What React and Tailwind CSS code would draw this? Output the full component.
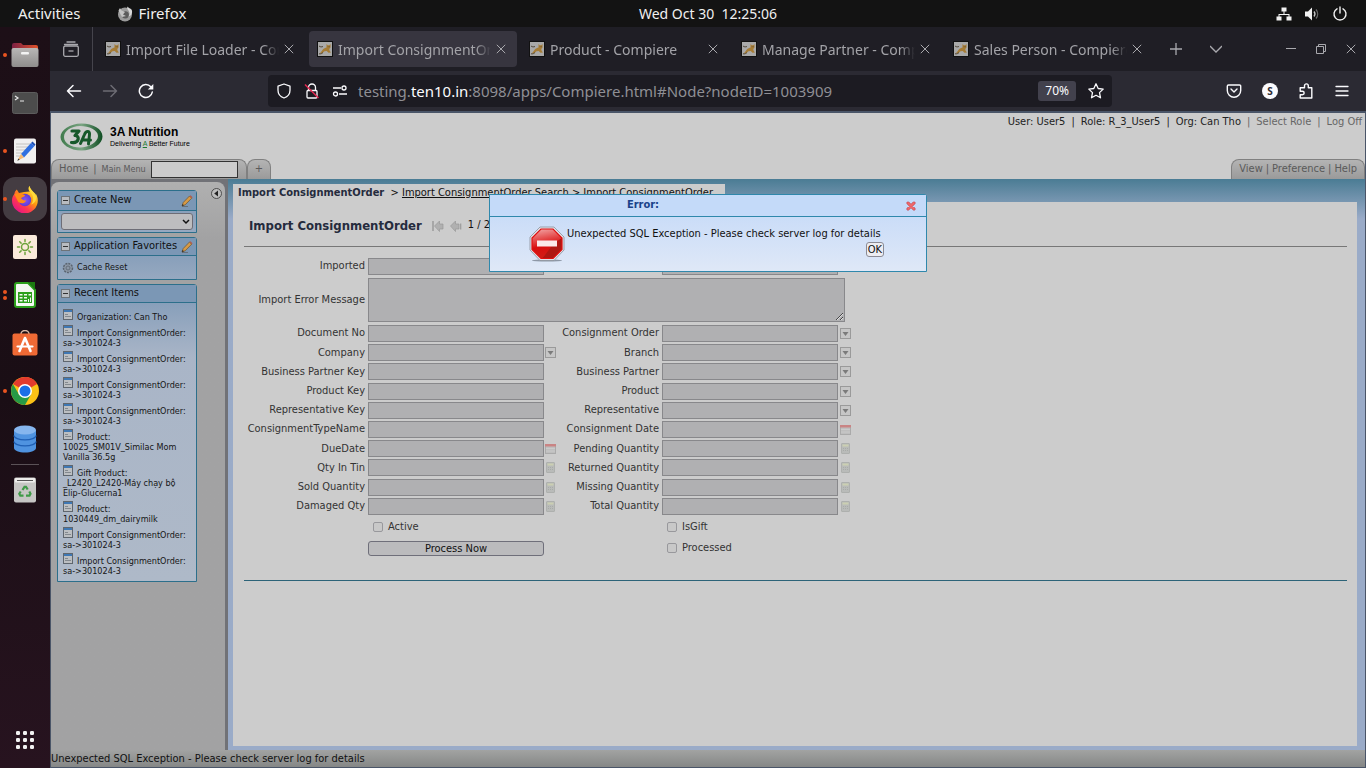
import React from "react";

/* ---------- dock icons ---------- */

function FilesIcon() {
  return (
    <svg viewBox="0 0 28 28" className="size-7">
      <defs>
        <linearGradient id="fTop" x1="0" x2="1"><stop offset="0" stopColor="#7d2144" /><stop offset="1" stopColor="#e0522a" /></linearGradient>
        <linearGradient id="fBody" x1="0" x2="0" y1="0" y2="1"><stop offset="0" stopColor="#b9b7b6" /><stop offset="1" stopColor="#8f8d8c" /></linearGradient>
      </defs>
      <path d="M1 4a2 2 0 0 1 2-2h7l2 2h13a2 2 0 0 1 2 2v8H1z" fill="url(#fTop)" />
      <rect x="0.500" y="7" width="27" height="19" rx="2" fill="url(#fBody)" />
      <rect x="10" y="11" width="8" height="2.500" rx="1" fill="#f3f3f3" />
    </svg>
  );
}

function TerminalIcon() {
  return (
    <svg viewBox="0 0 26 22" className="h-[22px] w-[26px]">
      <rect x="0.500" y="0.500" width="25" height="21" rx="2" fill="#4c4c4c" stroke="#5d5d5d" />
      <path d="M3 4l3 2-3 2M8 9h4" fill="none" stroke="#e8e8e8" strokeWidth="1.200" />
    </svg>
  );
}

function EditorIcon() {
  return (
    <svg viewBox="0 0 24 26" className="h-[26px] w-6">
      <rect x="1" y="0.500" width="22" height="25" rx="2" fill="#f1f0ef" />
      <path d="M3 6h14M3 9h12M3 12h12M3 15h8M3 18h5" stroke="#c4c2c0" strokeWidth="1" />
      <path d="M8 16L18 5l3.500 3L11 19.500z" fill="#2f6fe0" />
      <path d="M18 5l3.500 3 1-1.500-3-3z" fill="#1c4fb5" />
      <path d="M8 16l3 3.500-6.500 3z" fill="#f5b870" />
      <path d="M5.500 20.500l1.200 1.300-2.400 1z" fill="#333" />
    </svg>
  );
}

function FirefoxIcon() {
  return (
    <svg viewBox="0 0 28 28" className="size-7">
      <defs>
        <linearGradient id="ffx" x1="0.900" y1="0.100" x2="0.200" y2="0.950">
          <stop offset="0" stopColor="#fff44f" /><stop offset="0.400" stopColor="#ff980e" /><stop offset="0.700" stopColor="#ff3750" /><stop offset="1" stopColor="#e31587" />
        </linearGradient>
        <radialGradient id="ffp"><stop offset="0" stopColor="#8a55f2" /><stop offset="1" stopColor="#5b3bd6" /></radialGradient>
      </defs>
      <path d="M18.500 1c-1.500 2-1.300 4 .3 5.500L13 7 8 8 5.800 4.500C4 6 3.500 7.500 3.400 9 1.700 11 1 13 1 15.500a12.700 12.700 0 0 0 25.800 0c0-3-1-5.500-2.300-7l.2 2C23.500 7 19.500 5.500 18.500 1z" fill="url(#ffx)" />
      <circle cx="14" cy="15" r="6.200" fill="url(#ffp)" />
      <path d="M3.400 9c2-1.300 4-1 5.800 0 2 0 5 .5 4.800 1.800 0 1-3.300 1-3.800 3 1.600.5 2 2.400 5 1.600-1.500 3.400-6.200 3.800-8.200 1.200" fill="#ff8a16" />
      <path d="M18.500 1c-1.500 3 .5 5.500 2.300 8 2 3 2 8-1 10.500 5-1 6.300-6 4.700-10C23.500 7 19.500 5.500 18.500 1z" fill="#ffd93a" />
    </svg>
  );
}

function SunIcon() {
  return (
    <svg viewBox="0 0 24 24" className="size-6">
      <rect width="24" height="24" rx="2" fill="#fbeadb" />
      <circle cx="12" cy="12" r="3.500" fill="none" stroke="#6ea33c" strokeWidth="1.500" />
      <path d="M12 4.500v2M12 17.500v2M4.500 12h2M17.500 12h2M6.700 6.700l1.400 1.400M15.900 15.900l1.400 1.400M6.700 17.300l1.400-1.400M15.900 8.100l1.400-1.400" stroke="#6ea33c" strokeWidth="1.500" strokeLinecap="round" />
    </svg>
  );
}

function CalcIcon() {
  return (
    <svg viewBox="0 0 24 26" className="h-[26px] w-6">
      <path d="M2 3a2 2 0 0 1 2-2h11l7 7v15a2 2 0 0 1-2 2H4a2 2 0 0 1-2-2z" fill="#f4f8f2" stroke="#2ca01c" strokeWidth="2" />
      <path d="M15 0h7v8z" fill="#1c7a10" />
      <rect x="5" y="10" width="14" height="11" fill="#2ca01c" />
      <path d="M6.500 12h3v1.500h-3zM11 12h3v1.500h-3zM15.500 12h2.500v1.500h-2.500zM6.500 15h3v1.500h-3zM11 15h3v1.500h-3zM6.500 18h3v1.500h-3zM11 18h3v1.500h-3zM15 20v-3h1v3zM17 20v-4.500h1V20z" fill="#f4f8f2" />
    </svg>
  );
}

function SoftwareIcon() {
  return (
    <svg viewBox="0 0 26 26" className="size-[26px]">
      <path d="M9 4a4 3.500 0 0 1 8 0" fill="none" stroke="#d8b9a6" strokeWidth="1.500" />
      <rect x="0.500" y="3.500" width="25" height="22" rx="2" fill="#ef6a35" />
      <path d="M13 8L7.500 21M13 8l5.500 13" stroke="#fff" strokeWidth="2.600" strokeLinecap="round" />
      <path d="M5.500 16.500h15" stroke="#fff" strokeWidth="2.200" strokeLinecap="round" />
    </svg>
  );
}

function ChromeIcon() {
  return (
    <svg viewBox="0 0 28 28" className="size-7">
      <circle cx="14" cy="14" r="14" fill="#fbc116" />
      <path d="M14 14L1.900 7A14 14 0 0 1 26.100 7z" fill="#e33b2e" />
      <path d="M14 0a14 14 0 0 1 12.100 7H14z" fill="#e33b2e" />
      <path d="M1.900 7A14 14 0 0 0 14 28l6-10.500L14 14l-6 3.500z" fill="#269a46" />
      <circle cx="14" cy="14" r="7" fill="#fff" />
      <circle cx="14" cy="14" r="5.500" fill="#1a6fe8" />
    </svg>
  );
}

function DatabaseIcon() {
  return (
    <svg viewBox="0 0 24 28" className="h-7 w-6">
      <path d="M1 5v18c0 2.500 5 4.500 11 4.500s11-2 11-4.500V5z" fill="#4f93e0" />
      <ellipse cx="12" cy="5" rx="11" ry="4.500" fill="#86b6ee" />
      <path d="M1 10.500c0 2.500 5 4.300 11 4.300s11-1.800 11-4.300M1 16.500c0 2.500 5 4.300 11 4.300s11-1.800 11-4.300" fill="none" stroke="#1f5fb4" strokeWidth="1.300" />
    </svg>
  );
}

function TrashIcon() {
  return (
    <svg viewBox="0 0 24 26" className="h-[26px] w-6">
      <rect x="1" y="0.500" width="22" height="25" rx="2" fill="#c6c6c4" />
      <rect x="2" y="1" width="20" height="4.500" rx="1" fill="#ededeb" />
      <path d="M4 3.500h16" stroke="#555" strokeWidth="1" />
      <g fill="none" stroke="#3f9a47" strokeWidth="2.200">
        <path d="M9.500 13l2-3.200h1.500l1.700 2.700" />
        <path d="M16.300 14.500l1.200 2.300-1 1.900h-3.500" />
        <path d="M10.500 18.700H7.300l-1-1.900 1.400-2.300" />
      </g>
    </svg>
  );
}

const DOCK = [
  { name: "Files", Icon: FilesIcon, dots: 1 },
  { name: "Terminal", Icon: TerminalIcon, dots: 0 },
  { name: "Text Editor", Icon: EditorIcon, dots: 1 },
  { name: "Firefox", Icon: FirefoxIcon, dots: 1, active: true },
  { name: "Weather", Icon: SunIcon, dots: 0 },
  { name: "Calc", Icon: CalcIcon, dots: 2 },
  { name: "Software", Icon: SoftwareIcon, dots: 0 },
  { name: "Chrome", Icon: ChromeIcon, dots: 1 },
  { name: "Database", Icon: DatabaseIcon, dots: 0 },
];

function DockButton({ name, Icon, dots, active }) {
  return (
    <button aria-label={name} className="relative flex h-12 w-full items-center justify-center">
      <span className="absolute left-[3px] flex flex-col gap-[2px]">
        {dots > 0 && <span className="size-1 rounded-full bg-[#e95420]" />}
        {dots > 1 && <span className="size-1 rounded-full bg-[#e95420]" />}
      </span>
      <span className={active ? "flex size-11 items-center justify-center rounded-xl bg-[#443c42]" : "flex size-11 items-center justify-center"}>
        <Icon />
      </span>
    </button>
  );
}

function Dock() {
  return (
    <nav aria-label="Dock" className="flex w-[50px] shrink-0 flex-col bg-linear-to-b from-[#1d0f17] via-[#1a0e15] to-[#27131f] pt-1">
      {DOCK.map((d) => <DockButton key={d.name} {...d} />)}
      <hr className="mx-[11px] my-px border-[#5b5257]" />
      <DockButton name="Trash" Icon={TrashIcon} dots={0} />
      <button aria-label="Show Applications" className="mt-auto flex justify-center pb-[18px]">
        <svg viewBox="0 0 20 20" className="size-5" fill="#f2f2f2">
          {[3, 10, 17].map((y) => [3, 10, 17].map((x) => <rect key={x + "-" + y} x={x - 2} y={y - 2} width="4" height="4" rx="1.300" />))}
        </svg>
      </button>
    </nav>
  );
}

/* ---------- desktop top bar ---------- */

function TopBar() {
  return (
    <header className="grid h-[27px] shrink-0 grid-cols-3 items-center bg-[#131313] text-[14px] text-[#f0f0f0]">
      <div className="flex items-center text-[15px]">
        <button className="pl-[18px]">Activities</button>
        <button className="ml-9 flex items-center gap-[6px]">
          <svg viewBox="0 0 16 16" className="size-4">
            <circle cx="8" cy="8.500" r="7" fill="#9b9b9b" />
            <circle cx="8.300" cy="8.800" r="3.600" fill="#5c5c5c" />
            <path d="M10.500.5c-1 2 .5 3 1.300 4.500 1.200 2 .8 4-.3 5.500 3-1 4.500-4 3-7C13.500 2.500 11.500 2 10.500.5z" fill="#d9d9d9" />
            <path d="M1.500 4.500L3 2l1.500 2.500L8 6 6 8.500l3 1.500-4 1z" fill="#c4c4c4" />
          </svg>
          Firefox
        </button>
      </div>
      <button className="justify-self-center pl-[50px] whitespace-pre">Wed Oct 30  12:25:06</button>
      <div className="flex items-center justify-end gap-3 pr-[18px]">
        <svg viewBox="0 0 16 16" className="size-4" fill="#f2f2f2">
          <path d="M5.500 1.500h5v4h-5zM0.500 10.500h5v4h-5zM10.500 10.500h5v4h-5zM7.500 5.500h1v2.500H13.500v2.500h-1V9h-9v1.500h-1V8h5z" />
        </svg>
        <svg viewBox="0 0 16 16" className="size-4">
          <path d="M1 5.500h3L8 1.500v13L4 10.500H1z" fill="#f2f2f2" />
          <path d="M10 5.500a4 4 0 0 1 0 5" fill="none" stroke="#c9c9c9" strokeWidth="1.300" />
          <path d="M12 3.500a7 7 0 0 1 0 9" fill="none" stroke="#6a6a6a" strokeWidth="1.300" />
        </svg>
        <svg viewBox="0 0 16 16" className="size-4" fill="none" stroke="#f2f2f2" strokeWidth="1.400" strokeLinecap="round">
          <path d="M5 2.800a6 6 0 1 0 6 0M8 1v6" />
        </svg>
      </div>
    </header>
  );
}

/* ---------- browser chrome ---------- */

const TABS = ["Import File Loader - Compiere", "Import ConsignmentOrder", "Product - Compiere", "Manage Partner - Compiere", "Sales Person - Compiere"];

function CatIcon() {
  return (
    <svg viewBox="0 0 16 16" className="size-4 shrink-0">
      <rect x="0.500" y="0.500" width="15" height="15" fill="#a9a9a9" stroke="#111" />
      <path d="M9.500 3l1.200 1.200h1.600L13.500 3v3.500l-1.200 1.500c.2 1.500.3 2 1.700 3.500l-2.500.2-1.800-1.700-2.200.2-2 1.800-3 .8 1.700-2 1.600-2.300c1-1.200 2.700-1.500 3.700-2z" fill="#a67c35" />
      <path d="M2 5c1.500 1.200 2.500 1 4 .5M2 12.800c2 .3 3-.3 4-1.300M10.800 5.700h.6M12.300 5.700h.5" fill="none" stroke="#4a4030" strokeWidth="0.900" />
    </svg>
  );
}

function CrossIcon() {
  return (
    <svg viewBox="0 0 10 10" className="size-[10px]" fill="none" stroke="#a9a9ae" strokeWidth="1">
      <path d="M0.800 0.800l8.400 8.400M9.200 0.800l-8.400 8.400" />
    </svg>
  );
}

function TabStrip() {
  return (
    <div className="flex h-11 items-center bg-[#1f1e25] text-[14px] text-[#a3a3a8]">
      <button aria-label="Recent browsing" className="flex h-full w-[43px] items-center justify-center border-r border-[#45444c]">
        <svg viewBox="0 0 16 16" className="size-4" fill="none" stroke="#a9a9ae" strokeWidth="1.300">
          <path d="M4 1h8M1.500 3.500h13" strokeLinecap="round" />
          <rect x="0.700" y="5" width="14.600" height="10.300" rx="1.500" />
          <path d="M5.500 10h5" />
        </svg>
      </button>
      <div role="tablist" className="flex gap-[4px] pl-1">
        {TABS.map((t, i) => (
          <div key={t} className={i === 1 ? "flex h-9 w-52 items-center gap-[5px] rounded bg-[#37353f] pr-[11px] pl-2" : "flex h-9 w-52 items-center gap-[5px] rounded pr-[11px] pl-2"}>
            <CatIcon />
            <button role="tab" aria-selected={i === 1} className="min-w-0 flex-1 overflow-hidden mask-r-from-90% text-left whitespace-nowrap">{t}</button>
            <button aria-label={"Close " + t}><CrossIcon /></button>
          </div>
        ))}
      </div>
      <div className="ml-[17px] flex items-center gap-7">
        <button aria-label="New tab">
          <svg viewBox="0 0 12 12" className="size-3" stroke="#a9a9ae" strokeWidth="1.300"><path d="M0 6h12M6 0v12" /></svg>
        </button>
        <button aria-label="List tabs">
          <svg viewBox="0 0 12 12" className="size-3" fill="none" stroke="#a9a9ae" strokeWidth="1.300"><path d="M0 3l6 6 6-6" /></svg>
        </button>
      </div>
      <div className="ml-auto flex items-center gap-5 pr-[10px]">
        <button aria-label="Minimize">
          <svg viewBox="0 0 10 10" className="size-[10px]" stroke="#a9a9ae"><path d="M0 4.500h10" /></svg>
        </button>
        <button aria-label="Restore">
          <svg viewBox="0 0 10 10" className="size-[10px]" fill="none" stroke="#a9a9ae"><path d="M0.500 2.500h7v7h-7zM2.500 2.500v-2h7v7h-2" /></svg>
        </button>
        <button aria-label="Close window"><CrossIcon /></button>
      </div>
    </div>
  );
}

function NavBar() {
  return (
    <div className="flex h-10 items-center bg-[#2b2a33]">
      <div className="flex items-center gap-5 pl-4">
        <button aria-label="Back">
          <svg viewBox="0 0 16 16" className="size-4" fill="none" stroke="#fbfbfe" strokeWidth="1.500" strokeLinecap="round" strokeLinejoin="round"><path d="M14.500 8h-13M7 2.500L1.500 8 7 13.500" /></svg>
        </button>
        <button aria-label="Forward">
          <svg viewBox="0 0 16 16" className="size-4" fill="none" stroke="#6d6c74" strokeWidth="1.500" strokeLinecap="round" strokeLinejoin="round"><path d="M1.500 8h13M9 2.500L14.500 8 9 13.500" /></svg>
        </button>
        <button aria-label="Reload">
          <svg viewBox="0 0 16 16" className="size-4" fill="none" stroke="#fbfbfe" strokeWidth="1.500" strokeLinecap="round"><path d="M14.300 9a6.500 6.500 0 1 1-1.500-5.200" /><path d="M15.300 1v5.500H9.800z" fill="#fbfbfe" stroke="none" /></svg>
        </button>
      </div>
      <div className="mr-[114px] ml-[114px] flex h-8 flex-1 items-center rounded bg-[#1c1b22] px-2">
        <svg viewBox="0 0 16 16" className="size-4" fill="none" stroke="#fbfbfe" strokeWidth="1.300" strokeLinejoin="round"><path d="M8 1l6 2.200v4C14 11 11.500 13.800 8 15 4.500 13.800 2 11 2 7.200v-4z" /></svg>
        <svg viewBox="0 0 16 16" className="ml-3 size-4" fill="none" stroke="#fbfbfe" strokeWidth="1.300"><path d="M4.500 7V4.500a3.500 3.500 0 0 1 7 0V7" /><rect x="3" y="7.500" width="10" height="7.500" rx="1" /><path d="M1 1.500l13.500 13.500" stroke="#e22850" strokeWidth="1.500" /></svg>
        <svg viewBox="0 0 16 16" className="ml-3 size-4" fill="none" stroke="#fbfbfe" strokeWidth="1.300"><path d="M1 5h8M7 11h8" /><circle cx="12" cy="5" r="2" /><circle cx="3.500" cy="11" r="2" /></svg>
        <div role="textbox" aria-label="Address" className="ml-[10px] text-[15px] whitespace-nowrap text-[#8f8f95]">
          testing.<span className="text-[#fbfbfe]">ten10.in</span>:8098/apps/Compiere.html#Node?nodeID=1003909
        </div>
        <button className="ml-auto h-5 rounded-[3px] bg-[#42414d] px-[7px] text-[12px] text-[#fbfbfe]">70%</button>
        <button aria-label="Bookmark" className="ml-3">
          <svg viewBox="0 0 16 16" className="size-4" fill="none" stroke="#fbfbfe" strokeWidth="1.300" strokeLinejoin="round"><path d="M8 .8l2.200 4.700 5 .6-3.700 3.500 1 5.200L8 12.300l-4.500 2.500 1-5.200L.8 6.100l5-.6z" /></svg>
        </button>
      </div>
      <div className="flex items-center gap-5 pr-4">
        <button aria-label="Pocket">
          <svg viewBox="0 0 16 16" className="size-4" fill="none" stroke="#fbfbfe" strokeWidth="1.400" strokeLinecap="round" strokeLinejoin="round"><path d="M2.500 2h11A1.200 1.200 0 0 1 14.700 3.200v4.300a6.700 6.700 0 0 1-13.400 0V3.200A1.200 1.200 0 0 1 2.500 2zM5 6l3 3 3-3" /></svg>
        </button>
        <button aria-label="Account" className="flex size-4 items-center justify-center rounded-full bg-[#fbfbfe] text-[10px] font-bold text-[#2b2a33]">S</button>
        <button aria-label="Extensions">
          <svg viewBox="0 0 16 16" className="size-4" fill="none" stroke="#fbfbfe" strokeWidth="1.400" strokeLinejoin="round"><path d="M6.500 4.700V2.800a1.900 1.900 0 0 1 3.800 0v1.900h3.500v10.300H2.200v-3.300h2.200a1.700 1.700 0 0 0 0-3.500H2.200V4.700z" /></svg>
        </button>
        <button aria-label="Menu">
          <svg viewBox="0 0 16 16" className="size-4" stroke="#fbfbfe" strokeWidth="1.300" strokeLinecap="round"><path d="M2 3.500h12M2 8h12M2 12.500h12" /></svg>
        </button>
      </div>
    </div>
  );
}

/* ---------- page header ---------- */

function Logo() {
  return (
    <div className="flex items-start gap-[7px] pt-[10px] pl-[9px]">
      <svg viewBox="0 0 43 28" className="h-7 w-[43px]">
        <defs><linearGradient id="lg" x1="0" x2="1"><stop offset="0" stopColor="#3f7a4c" /><stop offset="0.500" stopColor="#7ba583" /><stop offset="1" stopColor="#0e4d22" /></linearGradient></defs>
        <path fillRule="evenodd" d="M21.500 0.500C33 0.500 42.500 6 42.500 13.500S33 27.500 21.500 27.500 0.500 21 0.500 14 10 .5 21.500 .5zM20 3C11 3 4 8 4 14s7 10.500 16 10.500S38 19 38 13 29 3 20 3z" fill="url(#lg)" />
        <path d="M12 8h7l-4 4.500c5 0 4.500 8-3.500 7" fill="none" stroke="#17582a" strokeWidth="3.200" strokeLinejoin="round" strokeLinecap="round" />
        <path d="M20.500 20.500l4-9c1.500-4 5.500-4 5 0l-1 9.500M22.500 17h8" fill="none" stroke="#17582a" strokeWidth="3" strokeLinejoin="round" strokeLinecap="round" />
      </svg>
      <div className="pt-[3px] font-['Liberation_Sans',Arial,sans-serif] text-black">
        <div className="text-[12px] leading-[13px] font-bold">3A Nutrition</div>
        <div className="text-[7px] leading-[9px]">Delivering <span className="text-[#1d7a34] underline">A</span> Better Future</div>
      </div>
    </div>
  );
}

const SHELL_TAB = "flex h-5 items-center rounded-t-lg border border-b-0 border-[#808080] bg-linear-to-b from-[#b4b4b4] to-[#9a9a9a] text-[#5a5a5a]";

function PageHeader() {
  return (
    <div className="bg-[#ccc]">
      <div className="flex h-[46px] justify-between">
        <Logo />
        <div className="flex gap-[6px] pt-px pr-[3px] text-[11px] text-[#222]">
          <span>User: User5</span><span>|</span><span>Role: R_3_User5</span><span>|</span><span>Org: Can Tho</span>
          <span className="text-[#666]">|</span><a href="#role" className="text-[#666]">Select Role</a>
          <span className="text-[#666]">|</span><a href="#logoff" className="text-[#666]">Log Off</a>
        </div>
      </div>
      <div className="flex">
        <div className={"w-[196px] gap-[5px] pl-[7px] text-[11px] " + SHELL_TAB}>
          <a href="#home">Home</a><span>|</span>
          <label htmlFor="mainmenu" className="text-[9px]">Main Menu</label>
          <input id="mainmenu" className="h-[17px] w-[87px] border border-[#333] bg-[#ccc]" />
        </div>
        <button className={"w-6 justify-center text-[11px] " + SHELL_TAB}>+</button>
        <div className={"ml-auto gap-[3px] px-[7px] text-[11px] " + SHELL_TAB}>
          <a href="#view">View</a><span>|</span><a href="#pref">Preference</a><span>|</span><a href="#help">Help</a>
        </div>
      </div>
    </div>
  );
}

/* ---------- sidebar ---------- */

function PencilIcon() {
  return (
    <svg viewBox="0 0 12 12" className="size-3">
      <path d="M1 11l1.200-3.500L8.500 1l2.200 2.200L4.200 9.800z" fill="#d79a45" stroke="#6b5330" strokeWidth="0.700" />
      <path d="M8.500 1l2.200 2.200.9-1L9.400.2z" fill="#b45a4a" />
      <path d="M1 11l.7-1.900 1.200 1.200z" fill="#222" />
      <path d="M1 11.500h6" stroke="#555" strokeWidth="0.600" />
    </svg>
  );
}

function RecordIcon() {
  return (
    <svg viewBox="0 0 10 11" className="mb-[2px] h-[11px] w-[10px] shrink-0">
      <rect x="0.500" y="0.500" width="9" height="10" fill="#bcbfc2" stroke="#5f666e" />
      <rect x="1" y="1" width="8" height="2" fill="#3f78b4" />
      <path d="M2 5.500h3M2 7.500h6" stroke="#83898f" />
    </svg>
  );
}

function SidePanel({ title, edit, headClass, children }) {
  return (
    <section className="flex flex-col rounded-t-[3px] border border-[#2c6f8b] bg-linear-to-b from-[#7d98b6] via-[#a9b5c7] via-[72px] to-[#aeb9c8]">
      <h2 className={"flex items-center gap-1 border-b border-[#2c6f8b] bg-[#7b97b5] px-[3px] text-[11px] whitespace-nowrap text-[#111] " + headClass}>
        <svg viewBox="0 0 9 9" className="size-[9px] shrink-0"><rect x="0.500" y="0.500" width="8" height="8" fill="#b9bcc0" stroke="#6d7378" /><path d="M2 4.500h5" stroke="#333" /></svg>
        <span className="flex-1">{title}</span>
        {edit && <PencilIcon />}
      </h2>
      {children}
    </section>
  );
}

const ORDER = ["Import ConsignmentOrder:", "sa->301024-3"];
const RECENT = [
  ["Organization: Can Tho"], ORDER, ORDER, ORDER, ORDER,
  ["Product:", "10025_SM01V_Similac Mom", "Vanilla 36.5g"],
  ["Gift Product:", "_L2420_L2420-Máy chạy bộ", "Elip-Glucerna1"],
  ["Product:", "1030449_dm_dairymilk"], ORDER, ORDER,
];

function Sidebar() {
  return (
    <aside className="mt-[3px] flex w-[174px] shrink-0 items-start rounded-t-lg bg-[#a2a2a3] bg-linear-to-b from-[#b0b0b0] to-[#a2a2a3] to-10% pt-[6px] pl-[6px]">
      <div className="flex w-[140px] flex-col gap-1 pt-[2px]">
        <SidePanel title="Create New" edit headClass="h-5">
          <span className="relative mx-[3px] my-[2px] flex">
            <select aria-label="Create New" className="h-[17px] w-full appearance-none rounded-[3px] border border-[#6d6d76] bg-[#bdbdbf]" />
            <svg viewBox="0 0 8 6" className="absolute top-[6px] right-[3px] h-[6px] w-2" fill="none" stroke="#111" strokeWidth="1.500"><path d="M1 1l3 3 3-3" /></svg>
          </span>
        </SidePanel>
        <SidePanel title="Application Favorites" edit headClass="h-[18px]">
          <a href="#cache" className="flex h-[23px] items-center gap-[3px] pl-1 text-[9px] text-[#151515]">
            <svg viewBox="0 0 12 12" className="size-3"><circle cx="6" cy="6" r="4.500" fill="#8b97a6" stroke="#5a6470" strokeWidth="1.500" strokeDasharray="2 1" /><circle cx="6" cy="6" r="2" fill="none" stroke="#5a6470" strokeWidth="0.800" /></svg>
            <span>Cache Reset</span>
          </a>
        </SidePanel>
        <SidePanel title="Recent Items" headClass="h-[18px]">
          <ul className="pt-[3px] pb-[5px] pl-[5px] text-[9px] leading-[10px] whitespace-nowrap text-[#151515]">
            {RECENT.map((lines, i) => (
              <li key={i}>
                <a href={"#item" + i} className="block">
                  <span className="flex h-4 items-end gap-1"><RecordIcon />{lines[0]}</span>
                  {lines.slice(1).map((l) => <span key={l} className="block">{l}</span>)}
                </a>
              </li>
            ))}
          </ul>
        </SidePanel>
      </div>
      <button aria-label="Collapse sidebar" className="ml-[14px]">
        <svg viewBox="0 0 11 11" className="size-[11px]"><circle cx="5.500" cy="5.500" r="5" fill="#bdbdbd" stroke="#444" strokeWidth="0.900" /><path d="M7 2.500v6L3.200 5.500z" fill="#222" /></svg>
      </button>
    </aside>
  );
}

/* ---------- form ---------- */

function FieldIcon({ kind }) {
  if (kind === "drop") {
    return (
      <svg viewBox="0 0 11 11" className="size-[11px]"><rect x="0.500" y="0.500" width="10" height="10" fill="#c6c6c6" stroke="#9a9a9a" /><path d="M2.500 4h6L5.500 8z" fill="#7b7b7b" /></svg>
    );
  }
  if (kind === "date") {
    return (
      <svg viewBox="0 0 11 11" className="size-[11px]"><rect x="0.500" y="1.500" width="10" height="9" fill="#bebebe" stroke="#aaa" /><rect x="0" y="1" width="11" height="2.500" fill="#c98484" /><path d="M1 5.500h9M1 8h9" stroke="#d0d0d0" strokeWidth="0.700" /></svg>
    );
  }
  if (kind === "calc") {
    return (
      <svg viewBox="0 0 11 11" className="size-[11px]"><rect x="1.500" y="0.500" width="8" height="10" rx="0.500" fill="#b9bbb9" stroke="#aeb0ae" /><rect x="2.500" y="1.500" width="6" height="2" fill="#cbcfb2" /><path d="M3 5.500h5M3 7.500h5" stroke="#a8aba8" strokeDasharray="1 1" /></svg>
    );
  }
  return null;
}

const INPUT = "h-[17px] w-[176px] border border-[#88888b] bg-[#b0b0b2]";

function Field({ label, icon }) {
  const id = label.replace(/\s/g, "");
  return (
    <>
      <label htmlFor={id} className="pr-[3px] text-right">{label}</label>
      <input id={id} readOnly className={INPUT} />
      <span className="flex justify-center"><FieldIcon kind={icon} /></span>
    </>
  );
}

const FIELDS = [
  ["Document No"], ["Consignment Order", "drop"],
  ["Company", "drop"], ["Branch", "drop"],
  ["Business Partner Key"], ["Business Partner", "drop"],
  ["Product Key"], ["Product", "drop"],
  ["Representative Key"], ["Representative", "drop"],
  ["ConsignmentTypeName"], ["Consignment Date", "date"],
  ["DueDate", "date"], ["Pending Quantity", "calc"],
  ["Qty In Tin", "calc"], ["Returned Quantity", "calc"],
  ["Sold Quantity", "calc"], ["Missing Quantity", "calc"],
  ["Damaged Qty", "calc"], ["Total Quantity", "calc"],
];

const COLS = "grid grid-cols-[124px_176px_13px_105px_176px_15px] items-center gap-y-[2px]";

function Tick({ label }) {
  return (
    <label className="flex items-center gap-[5px] pl-[5px]">
      <input type="checkbox" className="size-[10px] appearance-none rounded-[2px] border border-[#98989c] bg-[#c8c8c8]" />
      {label}
    </label>
  );
}

function FormPage() {
  return (
    <main className="flex min-w-0 flex-1 flex-col bg-linear-to-b from-[#4a7c94] to-[#9aabc8] to-[40px] pt-[5px] pr-2 pb-1 pl-[5px]">
      <nav aria-label="Breadcrumb" className="flex h-[18px] w-[492px] bg-[#ccc] pl-[5px] text-[11px] leading-[17px] whitespace-pre text-[#111]">
        <span className="font-bold text-[#252b3d]">Import ConsignmentOrder</span>
        <span>{"  > "}</span>
        <a href="#search" className="underline">Import ConsignmentOrder Search</a>
        <a href="#order" className="underline">{" > Import ConsignmentOrder"}</a>
      </nav>
      <div className="flex-1 bg-[#ccc] pr-[10px] pl-[11px] text-[11px] text-[#333]">
        <div className="flex h-11 items-center gap-[6px] pt-[3px] pl-[5px]">
          <h1 className="text-[13px] font-bold text-[#252b3d]">Import ConsignmentOrder</h1>
          <button aria-label="First record" className="pl-1">
            <svg viewBox="0 0 12 12" className="size-3"><path d="M1 1v10" stroke="#9b9b9b" strokeWidth="1.500" /><path d="M2.500 6l5-5v3H11v5H7.500v2.500z" fill="#b0b0b0" stroke="#9a9a9a" strokeWidth="0.700" /></svg>
          </button>
          <button aria-label="Previous record">
            <svg viewBox="0 0 12 12" className="size-3"><path d="M0.500 6l5-5v3H9v5H5.500v2.500z" fill="#b0b0b0" stroke="#9a9a9a" strokeWidth="0.700" /><path d="M10.700 3.500v6" stroke="#9b9b9b" strokeWidth="1.200" /></svg>
          </button>
          <span className="text-[#111]">1 / 2</span>
        </div>
        <hr className="border-t border-[#777]" />
        <form className="pt-[11px]">
          <div className={COLS}>
            <Field label="Imported" />
            <Field label="Import Date" />
          </div>
          <div className="mt-[3px] flex items-center">
            <label htmlFor="message" className="w-[124px] shrink-0 pr-[3px] text-right">Import Error Message</label>
            <textarea id="message" readOnly className="h-11 w-[477px] border border-[#88888b] bg-[#b0b0b2]" />
          </div>
          <div className={"mt-[3px] h-[190px] grid-rows-10 " + COLS}>
            {FIELDS.map(([label, icon]) => <Field key={label} label={label} icon={icon} />)}
          </div>
          <div className="mt-1 ml-[124px] grid w-[477px] grid-cols-[294px_1fr] items-center gap-y-[5px] leading-4">
            <Tick label="Active" />
            <Tick label="IsGift" />
            <button type="button" className="h-[15px] w-[176px] rounded-[3px] border border-[#6f6f7a] bg-[#bbbbbd] leading-[13px] text-[#111]">Process Now</button>
            <Tick label="Processed" />
          </div>
        </form>
        <hr className="mt-6 border-[#2c6378]" />
      </div>
    </main>
  );
}

/* ---------- error dialog ---------- */

function StopIcon() {
  return (
    <svg viewBox="0 0 36 36" className="size-9 shrink-0">
      <defs>
        <linearGradient id="st" x1="0.200" y1="0" x2="0.400" y2="1"><stop offset="0" stopColor="#f2a3a3" /><stop offset="0.350" stopColor="#e44a4a" /><stop offset="0.600" stopColor="#d80e0e" /><stop offset="1" stopColor="#d02018" /></linearGradient>
      </defs>
      <ellipse cx="18" cy="34.500" rx="15" ry="1" fill="#8d97a6" />
      <path d="M11 1h14l10 10v13L25 34.500H11L1 24V11z" fill="#dfe3ea" stroke="#8a8f99" strokeWidth="0.800" />
      <path d="M12 3h12l9 9v11.500L24 32.500H12L3 23.500V12z" fill="url(#st)" />
      <path d="M33 12v11.500L24 32.500H13C19 27 20 20 33 12z" fill="#ae1712" />
      <path d="M12 3h12l9 9v11.500L24 32.500H12L3 23.500V12z" fill="none" stroke="#e01010" strokeWidth="1.200" />
      <rect x="8" y="14.500" width="20" height="6" fill="#fbe9e9" />
    </svg>
  );
}

function ErrorDialog() {
  return (
    <div role="alertdialog" aria-labelledby="err-title" className="absolute top-[81px] left-[438px] w-[438px] rounded-tr-[3px] border border-[#2f88ac] bg-linear-to-b from-[#c2d8f8] to-[#dfe8f7] text-[11px] text-[#111]">
      <div className="flex h-[22px] items-center border-b border-[#2f88ac] bg-[#c4daf9] pr-[10px]">
        <h2 id="err-title" className="w-[306px] pb-px text-center font-bold text-[#1a428a]">Error:</h2>
        <button aria-label="Close" className="ml-auto">
          <svg viewBox="0 0 10 10" className="size-[10px]"><path d="M2 2l6 6M8 2l-6 6" stroke="#c23a44" strokeWidth="3" strokeLinecap="round" /><path d="M2 2l6 6M8 2l-6 6" stroke="#ee6a6e" strokeWidth="1.800" strokeLinecap="round" /></svg>
        </button>
      </div>
      <div className="flex gap-[2px] py-[9px] pl-[39px]">
        <StopIcon />
        <div className="flex w-[319px] flex-col">
          <p className="leading-4">Unexpected SQL Exception - Please check server log for details</p>
          <button className="mr-[2px] h-[15px] self-end rounded-[3px] border border-[#8b8b95] bg-[#ededf1] px-px leading-[13px]">OK</button>
        </div>
      </div>
    </div>
  );
}

export default function App() {
  return (
    <div className="flex h-screen flex-col overflow-hidden bg-[#131313] font-['Noto_Sans','Open_Sans',sans-serif]">
      <TopBar />
      <div className="flex min-h-0 flex-1">
        <Dock />
        <div className="flex min-w-0 flex-1 flex-col">
          <TabStrip />
          <NavBar />
          <div className="relative flex min-h-0 flex-1 flex-col border border-t-2 border-[#4a5568] font-['DejaVu_Sans_Condensed','DejaVu_Sans',sans-serif]">
            <PageHeader />
            <div className="flex min-h-0 flex-1 bg-[#717277]">
              <Sidebar />
              <div className="w-[3px] shrink-0" />
              <FormPage />
            </div>
            <footer className="h-[17px] bg-linear-to-b from-[#a2a3a2] to-[#858786] text-[11px] leading-[17px] text-[#111]">
              Unexpected SQL Exception - Please check server log for details
            </footer>
            <ErrorDialog />
          </div>
        </div>
      </div>
    </div>
  );
}
